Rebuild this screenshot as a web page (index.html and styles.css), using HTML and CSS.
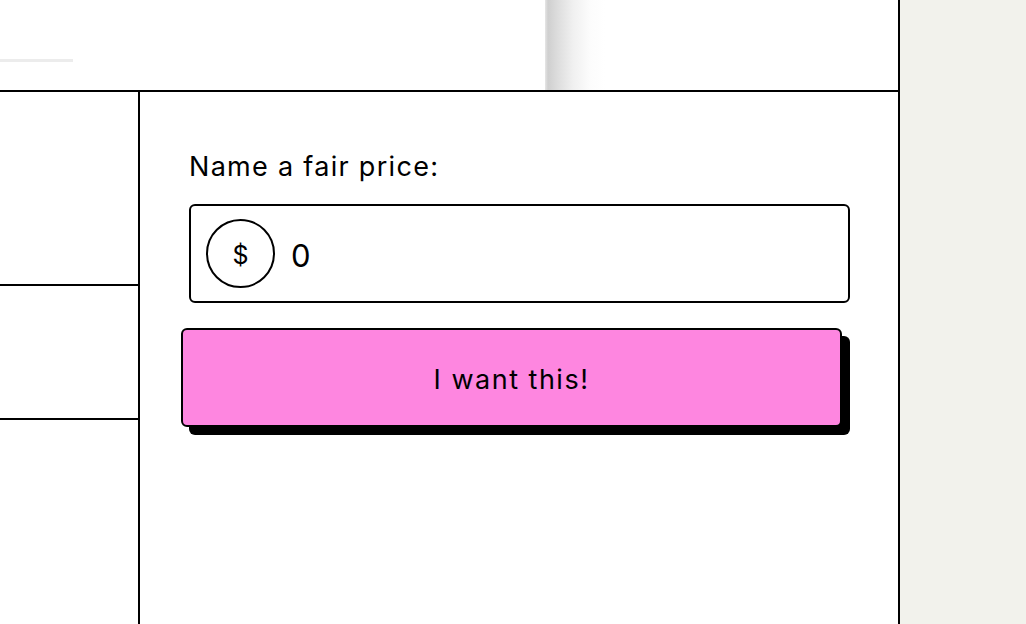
FILE: index.html
```html
<!DOCTYPE html>
<html lang="en">
<head>
<meta charset="utf-8">
<title>Product</title>
<link rel="stylesheet" href="styles.css">
</head>
<body>
<div class="page">
  <main class="card">
    <div class="media">
      <div class="media-line"></div>
      <div class="media-shadow"></div>
    </div>
    <div class="content">
      <div class="info">
        <div class="info-cell info-cell--tall"></div>
        <div class="info-cell info-cell--short"></div>
        <div class="info-cell info-cell--rest"></div>
      </div>
      <section class="purchase">
        <label class="price-label" for="price">Name a fair price:</label>
        <div class="price-input">
          <span class="currency">$</span>
          <span class="price-value" id="price">0</span>
        </div>
        <button class="buy-button" type="button">I want this!</button>
      </section>
    </div>
  </main>
  <aside class="side"></aside>
</div>
</body>
</html>
```
FILE: styles.css
```css
* { box-sizing: border-box; }
html, body { margin: 0; height: 100%; }
body {
  font-family: Inter, "Noto Sans", sans-serif;
  color: #000;
  background: #f2f2ec;
  overflow: hidden;
}
.page {
  display: flex;
  height: 624px;
}
.card {
  width: 900px;
  background: #fff;
  border-right: 2px solid #000;
  display: flex;
  flex-direction: column;
}
.media {
  height: 92px;
  border-bottom: 2px solid #000;
  position: relative;
}
.media-line {
  position: absolute;
  left: 0;
  top: 59px;
  width: 73px;
  height: 3px;
  background: #ececec;
  filter: blur(0.7px);
}
.media-shadow {
  position: absolute;
  left: 545px;
  top: 0;
  width: 60px;
  height: 90px;
  background: linear-gradient(to right, #e6e6e6 0px, #cfcfcf 3px, #dcdcdc 12px, #f0f0f0 28px, #fcfcfc 45px, #fff 60px);
}
.content {
  flex: 1;
  display: flex;
}
.info {
  width: 140px;
  border-right: 2px solid #000;
  display: flex;
  flex-direction: column;
}
.info-cell { border-bottom: 2px solid #000; }
.info-cell--tall { height: 194px; }
.info-cell--short { height: 134px; }
.info-cell--rest { flex: 1; border-bottom: 0; }
.purchase {
  flex: 1;
  padding: 50px 48px 0 49px;
  display: flex;
  flex-direction: column;
}
.price-label {
  font-size: 27px;
  line-height: 50px;
  letter-spacing: 1.3px;
  margin-bottom: 12px;
}
.price-input {
  height: 99px;
  border: 2px solid #000;
  border-radius: 6px;
  display: flex;
  align-items: center;
  gap: 16px;
  padding-left: 15px;
}
.currency {
  width: 69px;
  height: 69px;
  border: 2px solid #000;
  border-radius: 50%;
  display: flex;
  align-items: center;
  justify-content: center;
  font-size: 25px;
  padding-top: 2px;
}
.price-value {
  font-size: 31px;
  padding-top: 3px;
}
.buy-button {
  margin-top: 33px;
  height: 99px;
  width: 100%;
  background: #fe86e0;
  border: 2px solid #000;
  border-radius: 6px;
  font-family: inherit;
  font-size: 27px;
  letter-spacing: 1.5px;
  padding-top: 4px;
  color: #000;
  transform: translate(-8px, -8px);
  box-shadow: 8px 8px 0 #000;
  cursor: pointer;
}
.side { flex: 1; background: #f2f2ec; }
```
